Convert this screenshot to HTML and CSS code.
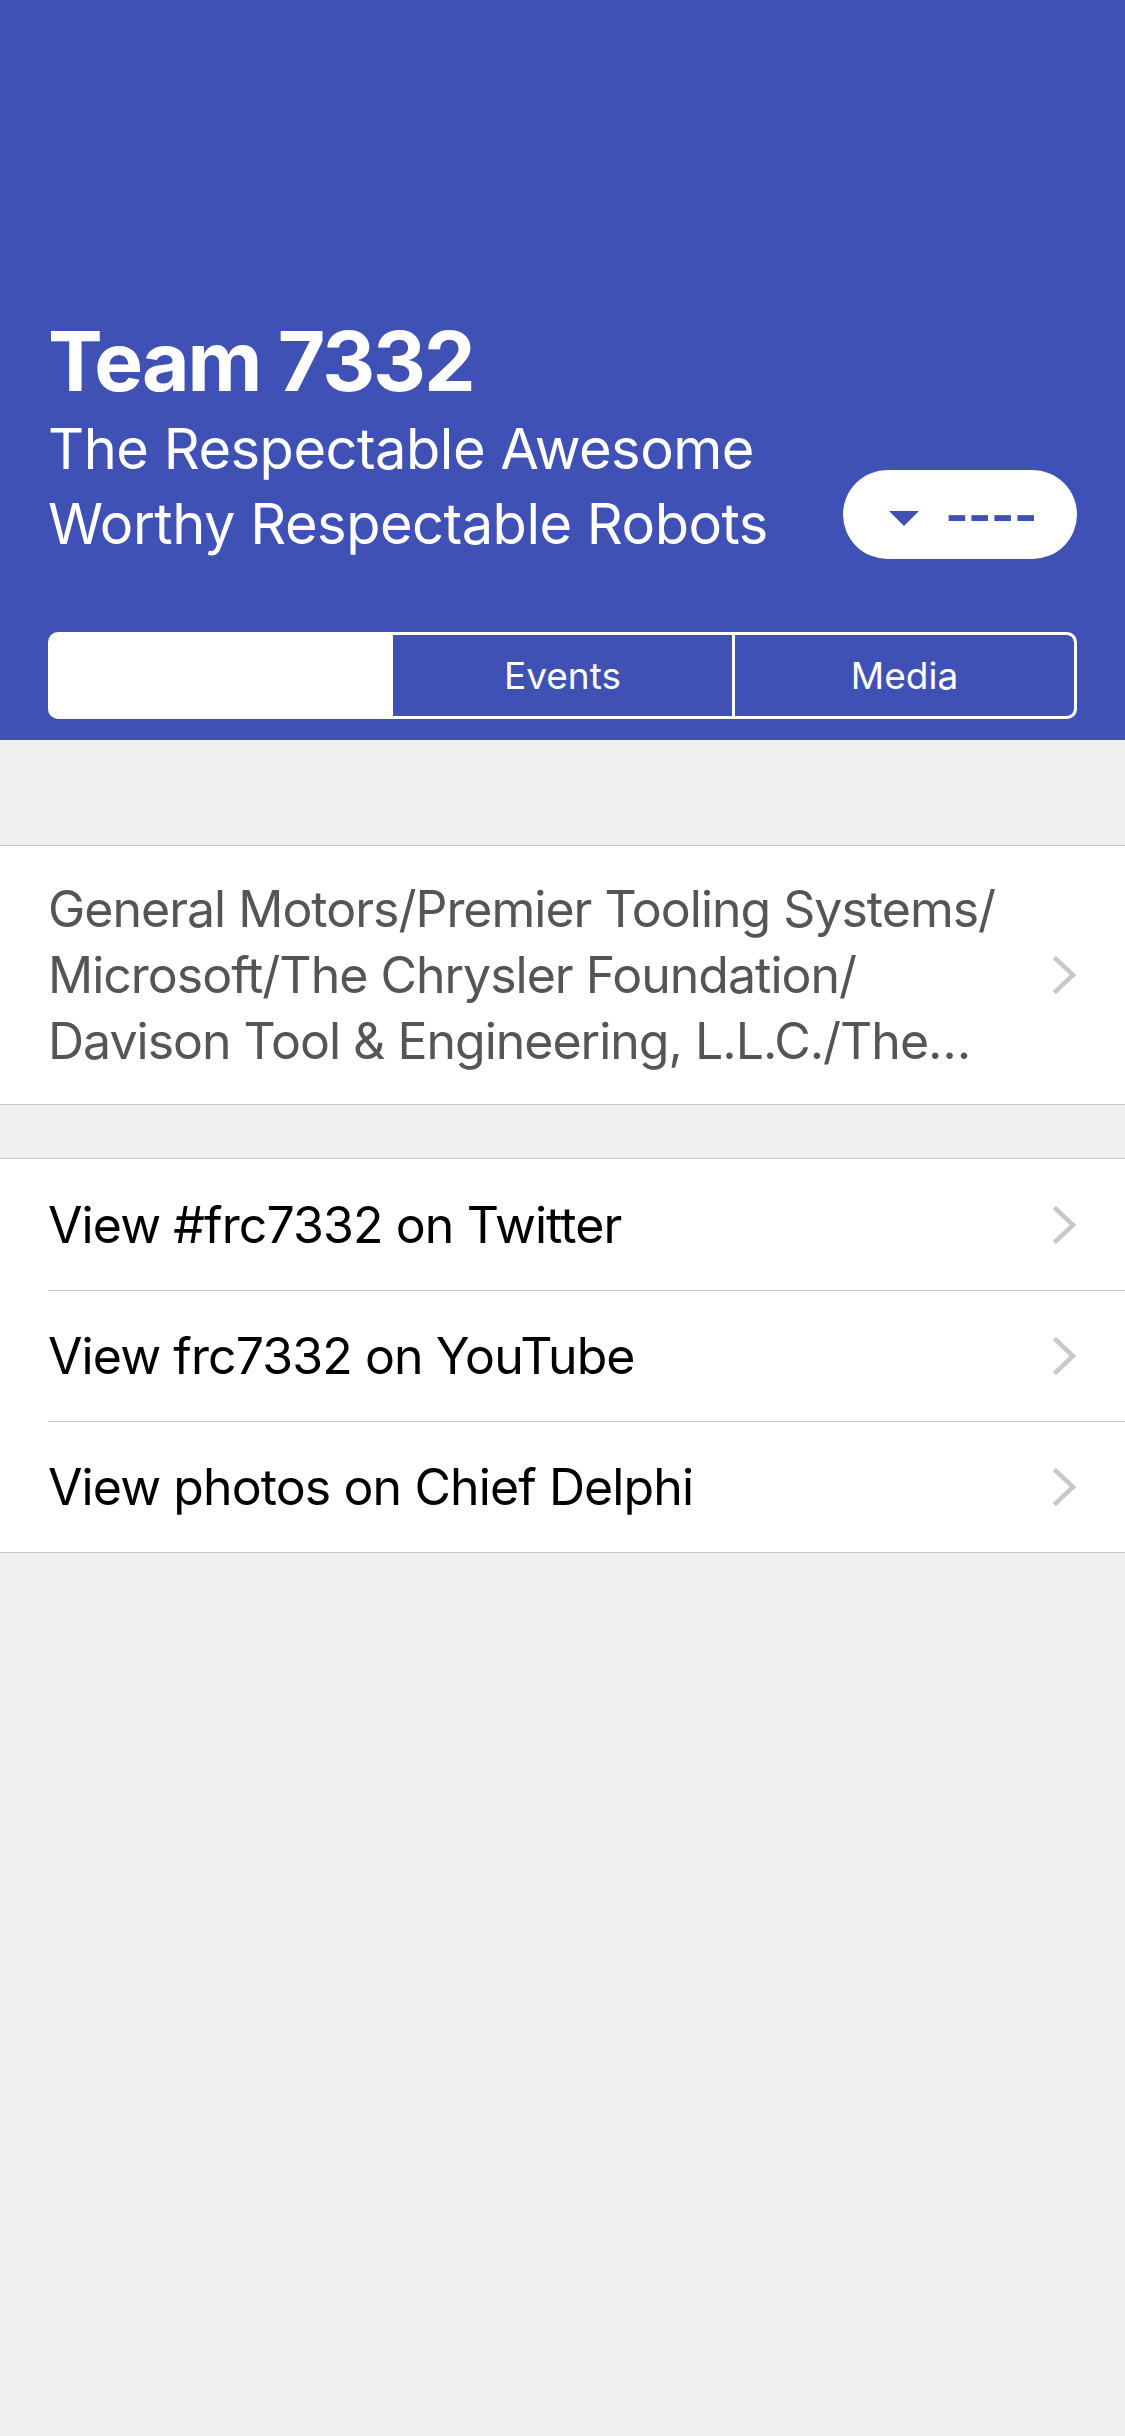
FILE: index.html
```html
<!DOCTYPE html>
<html lang="en">
<head>
<meta charset="utf-8">
<title>Team 7332</title>
<link rel="stylesheet" href="styles.css">
</head>
<body>
<div class="screen">
  <header class="header">
    <h1 class="title">Team 7332</h1>
    <div class="subrow">
      <p class="subtitle">The Respectable Awesome<br>Worthy Respectable Robots</p>
      <button class="year-btn" type="button">
        <svg class="tri" width="30" height="15" viewBox="0 0 30 15"><path d="M0 0H30L15 15Z" fill="#3F51B5"/></svg>
        <span class="year">----</span>
      </button>
    </div>
    <div class="segments">
      <div class="seg seg-selected"></div>
      <div class="seg">Events</div>
      <div class="seg seg-last">Media</div>
    </div>
  </header>

  <section class="group group-first">
    <div class="cell cell-sponsors">
      <p class="sponsors">General Motors/Premier Tooling Systems/<br>Microsoft/The Chrysler Foundation/<br>Davison Tool &amp; Engineering, L.L.C./The…</p>
      <svg class="chev" width="24" height="38" viewBox="0 0 24 38"><path d="M3 3L20 19L3 35" fill="none" stroke="#C7C7CC" stroke-width="4.5" stroke-linecap="square"/></svg>
    </div>
  </section>

  <section class="group group-second">
    <div class="cell cell-link">
      <span class="link-text">View #frc7332 on Twitter</span>
      <svg class="chev" width="24" height="38" viewBox="0 0 24 38"><path d="M3 3L20 19L3 35" fill="none" stroke="#C7C7CC" stroke-width="4.5" stroke-linecap="square"/></svg>
    </div>
    <div class="cell cell-link">
      <span class="link-text">View frc7332 on YouTube</span>
      <svg class="chev" width="24" height="38" viewBox="0 0 24 38"><path d="M3 3L20 19L3 35" fill="none" stroke="#C7C7CC" stroke-width="4.5" stroke-linecap="square"/></svg>
    </div>
    <div class="cell cell-link">
      <span class="link-text">View photos on Chief Delphi</span>
      <svg class="chev" width="24" height="38" viewBox="0 0 24 38"><path d="M3 3L20 19L3 35" fill="none" stroke="#C7C7CC" stroke-width="4.5" stroke-linecap="square"/></svg>
    </div>
  </section>
</div>
</body>
</html>
```

FILE: styles.css
```css
* { box-sizing: border-box; }

html, body {
  margin: 0;
  padding: 0;
}

body {
  width: 1125px;
  min-height: 2436px;
  background: #efefef;
  font-family: Inter, "Liberation Sans", sans-serif;
}

.screen {
  width: 1125px;
  min-height: 2436px;
  background: #efefef;
}

.header {
  background: #3F51B5;
  padding: 312px 48px 21px 48px;
  color: #fff;
}

.title {
  margin: 0;
  font-size: 82px;
  font-weight: 700;
  line-height: 100px;
  letter-spacing: -2px;
}

.subrow {
  display: flex;
  justify-content: space-between;
  align-items: flex-end;
}

.subtitle {
  margin: 0;
  font-size: 56px;
  font-weight: 400;
  line-height: 75px;
  letter-spacing: -0.5px;
}

.year-btn {
  width: 234px;
  height: 89px;
  margin-bottom: 3px;
  border: none;
  border-radius: 45px;
  background: #fff;
  display: flex;
  align-items: center;
  justify-content: center;
  gap: 26px;
  padding: 0 0 0 6px;
  font-family: inherit;
}

.tri {
  display: block;
  margin-top: 7px;
}

.year {
  color: #3F51B5;
  font-size: 50px;
  font-weight: 700;
  letter-spacing: -0.5px;
  line-height: 1;
}

.segments {
  margin-top: 70px;
  height: 87px;
  border: 3px solid #fff;
  border-radius: 10px;
  background: #fff;
  display: grid;
  grid-template-columns: repeat(3, 1fr);
  column-gap: 3px;
  overflow: hidden;
}

.seg {
  background: #3F51B5;
  color: #fff;
  display: flex;
  align-items: center;
  justify-content: center;
  font-size: 37px;
  font-weight: 400;
}

.seg-selected {
  background: #fff;
}

.seg-last {
  border-radius: 0 7px 7px 0;
}

.group {
  background: #fff;
  border-top: 1px solid #c8c7cc;
  border-bottom: 1px solid #c8c7cc;
}

.group-first {
  margin-top: 105px;
}

.group-second {
  margin-top: 53px;
}

.cell {
  display: flex;
  align-items: center;
  justify-content: space-between;
  padding: 0 48px 0 48px;
}

.cell-sponsors {
  padding-top: 30px;
  padding-bottom: 30px;
}

.sponsors {
  margin: 0;
  color: #555;
  font-size: 50px;
  line-height: 66px;
  letter-spacing: -1px;
}

.cell-link {
  height: 131px;
  margin-left: 48px;
  padding-left: 0;
  border-top: 1px solid #c8c7cc;
}

.cell-link:first-child {
  border-top: none;
  height: 131px;
}

.link-text {
  color: #000;
  font-size: 50px;
  letter-spacing: -0.9px;
}

.chev {
  flex: none;
  display: block;
}
```
